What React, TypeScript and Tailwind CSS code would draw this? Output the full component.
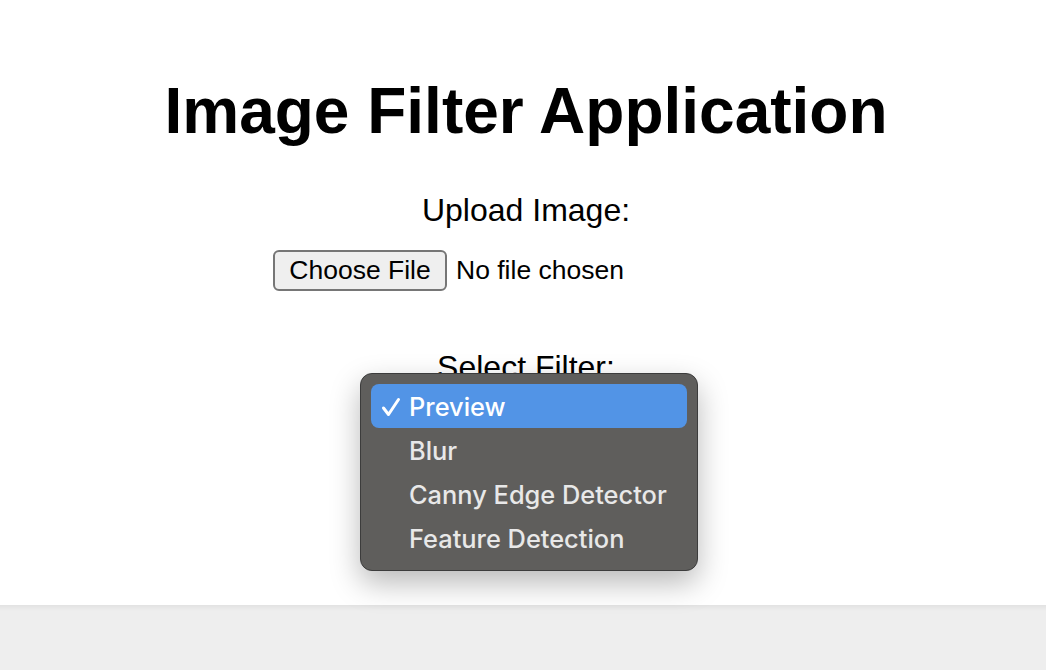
import React from "react";

const filters = ["Preview", "Blur", "Canny Edge Detector", "Feature Detection"];

export default function App() {
  return (
    <div className="h-[670px] flex flex-col overflow-hidden bg-white font-['Liberation_Sans',Arial,sans-serif] text-black">
      <div className="relative h-[605px] flex flex-col items-center pl-[6px]">
        <h1 className="mt-[74px] text-[64px] leading-[74px] font-bold">Image Filter Application</h1>

        <label className="mt-[44px] text-[32px] leading-[36px]">Upload Image:</label>

        <div className="mt-[22px] w-[506px] flex items-center gap-[9px]">
          <button className="h-[41px] w-[174px] rounded-[6px] border-2 border-[#767676] bg-[#efefef] text-[26.5px] leading-none">
            Choose File
          </button>
          <span className="text-[26.5px] leading-none">No file chosen</span>
        </div>

        <label className="mt-[58px] text-[32px] leading-[36px]">Select Filter:</label>

        {/* native select popup, drawn open */}
        <div className="absolute left-[360px] top-[373px] w-[338px] h-[198px] rounded-[12px] border border-[#3c3c3c] bg-[#5f5e5c] p-[10px] shadow-[0_12px_30px_rgba(0,0,0,0.28)] font-['Inter',sans-serif]">
          {filters.map((f, i) => (
            <div
              key={f}
              className={
                i === 0
                  ? "h-[44px] flex items-center pt-[3px] rounded-[8px] bg-[#5294e6] text-white text-[25.4px] font-medium"
                  : "h-[44px] flex items-center pt-[3px] text-[#e8e8e8] text-[25.4px] font-medium"
              }
            >
              <span className="w-[38px] flex justify-center pl-[2px] pb-[2px]">
                {i === 0 && (
                  <svg width="20" height="20" viewBox="0 0 20 20" fill="none">
                    <path d="M2.5 11l5 6.5L17.5 2.5" stroke="white" strokeWidth="3" strokeLinecap="round" strokeLinejoin="round" />
                  </svg>
                )}
              </span>
              <span>{f}</span>
            </div>
          ))}
        </div>
      </div>
      <div className="flex-1 bg-[linear-gradient(to_bottom,#e2e2e2,#eeeeee_6px,#eeeeee)]" />
    </div>
  );
}
